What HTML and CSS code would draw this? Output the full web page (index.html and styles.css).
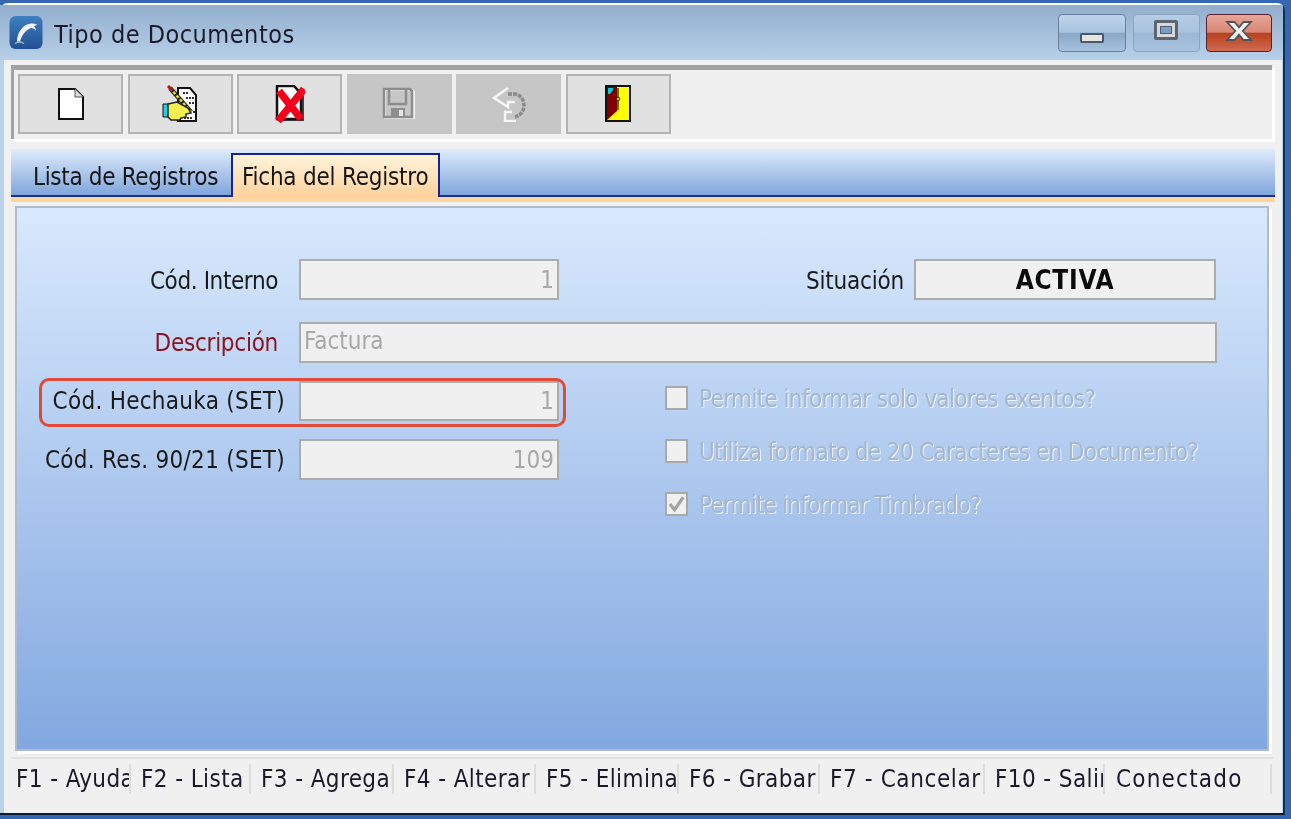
FILE: index.html
```html
<!DOCTYPE html>
<html lang="es">
<head>
<meta charset="utf-8">
<title>Tipo de Documentos</title>
<link rel="stylesheet" href="styles.css">
</head>
<body>
<div class="window">
  <header class="titlebar">
    <svg class="app-icon" viewBox="0 0 34 34" aria-hidden="true">
      <defs><linearGradient id="ai" x1="0" y1="0" x2="0" y2="1"><stop offset="0" stop-color="#3f7fc0"/><stop offset="1" stop-color="#234f92"/></linearGradient></defs>
      <rect x="0.5" y="0.5" width="33" height="33" rx="6" fill="url(#ai)"/>
      <path d="M8 26C8 18 13 9 22 8c2 0 5 0 6 1l-3 2c1 1 2 2 2 4-2-2-4-3-6-2-5 2-8 7-10 13z" fill="#eef2f8"/>
      <path d="M6 28c3-2 6-2 9 0" stroke="#9fbcdd" stroke-width="1.500" fill="none"/>
    </svg>
    <span class="title-text">Tipo de Documentos</span>
    <div class="caption-buttons">
      <div class="cap cap-min"><span class="glyph-min"></span></div>
      <div class="cap cap-max"><span class="glyph-max"></span></div>
      <div class="cap cap-close">
        <svg class="glyph-x" viewBox="0 0 24 16" aria-hidden="true"><path d="M4 2h5l3 3.500L15 2h5l-5.500 6L20 14h-5l-3-3.500L9 14H4l5.500-6z" fill="#f2f2f2" stroke="#555" stroke-width="1.200"/></svg>
      </div>
    </div>
  </header>
  <div class="client">
    <div class="toolbar">
      <button class="tool">
        <svg class="ic" width="28" height="34" viewBox="0 0 28 34" aria-hidden="true"><path d="M2 2h16l8 8v22H2z" fill="#fff" stroke="#111" stroke-width="2"/><path d="M18 2v8h8" fill="#ddd" stroke="#555" stroke-width="1"/></svg>
      </button>
      <button class="tool">
        <svg class="ic" width="36" height="38" viewBox="0 0 36 38" aria-hidden="true">
          <path d="M16 3h12l6 7v26H16z" fill="#fff" stroke="#111" stroke-width="2"/>
          <path d="M21 8h6M24 13h8M27 18h5M27 27h2M31 27h2M22 33h9" stroke="#333" stroke-width="2" stroke-dasharray="2 1"/>
          <path d="M8 3l21 24" stroke="#222" stroke-width="4.500"/>
          <path d="M8 3l21 24" stroke="#e8e020" stroke-width="2.500" stroke-dasharray="3 2"/>
          <path d="M6 1l4 4" stroke="#b01818" stroke-width="3"/>
          <path d="M1 19h5v13H1z" fill="#20d0e0" stroke="#111"/>
          <path d="M6 19l9-2 11 6 3 5-5 1v3l-5 1-1 2H9l-3-3z" fill="#f5f050" stroke="#222" stroke-width="1.500"/>
        </svg>
      </button>
      <button class="tool">
        <svg class="ic" width="30" height="38" viewBox="0 0 30 38" aria-hidden="true">
          <path d="M3 3l2 33h24V11l-7-8z" fill="#444"/>
          <path d="M2 1h17l7 8v25H2z" fill="#fff" stroke="#111" stroke-width="2.500"/>
          <path d="M4 6l22 28M29 4L3 36" stroke="#f4001a" stroke-width="7.500"/>
        </svg>
      </button>
      <button class="tool tool-off">
        <svg class="ic" width="34" height="34" viewBox="0 0 34 34" aria-hidden="true">
          <path d="M3 3h27l2 2v26H3z" fill="none" stroke="#f3f3f3" stroke-width="2"/>
          <path d="M2 2h26l2 2v26H2z" fill="none" stroke="#8d8d8d" stroke-width="2.500"/>
          <path d="M7 3v14h17V3" fill="none" stroke="#8d8d8d" stroke-width="2.500"/>
          <path d="M9 29v-8h14v8" fill="#8d8d8d"/><path d="M17 23h4v6h-4z" fill="#e4e4e4"/>
        </svg>
      </button>
      <button class="tool tool-off">
        <svg class="ic" width="36" height="36" viewBox="0 0 36 36" aria-hidden="true">
          <path d="M17 2L3 12l14 9v-5h7" fill="none" stroke="#f6f6f6" stroke-width="2.500"/>
          <path d="M17 8h7c12 2 12 20 0 23" fill="none" stroke="#8c8c8c" stroke-width="3.500" stroke-dasharray="4 1"/>
          <path d="M21 26H14v9h11" fill="none" stroke="#f6f6f6" stroke-width="2.500"/>
        </svg>
      </button>
      <button class="tool">
        <svg class="ic" width="26" height="38" viewBox="0 0 26 38" aria-hidden="true">
          <rect x="1" y="1" width="24" height="35" fill="#ffff00" stroke="#111" stroke-width="2"/>
          <path d="M2 2h10v24L2 35z" fill="#800000"/>
          <path d="M13 3v22" stroke="#111" stroke-width="1.200"/>
          <path d="M3 3h5v2L5 9H3z" fill="#12c8e0"/>
          <circle cx="13" cy="14" r="1.800" fill="#d8c020" stroke="#111" stroke-width=".8"/>
        </svg>
      </button>
    </div>
    <nav class="tabstrip">
      <div class="tab tab-list">Lista de Registros</div>
      <div class="tab tab-active">Ficha del Registro</div>
    </nav>
    <div class="tab-rule"></div>
    <main class="panel">
      <div class="row row-first">
        <label class="lbl lbl-wide lbl-int">Cód. Interno</label>
        <div class="field field-short num">1</div>
        <label class="lbl-sit">Situación</label>
        <div class="field field-sit">ACTIVA</div>
      </div>
      <div class="row row-desc">
        <label class="lbl lbl-wide lbl-req">Descripción</label>
        <div class="field field-long">Factura</div>
      </div>
      <div class="lower">
        <div class="lower-left">
          <div class="row row-hech">
            <label class="lbl lbl-set">Cód. Hechauka (SET)</label>
            <div class="field field-short num">1</div>
            <div class="highlight"></div>
          </div>
          <div class="row row-res">
            <label class="lbl lbl-set">Cód. Res. 90/21 (SET)</label>
            <div class="field field-short num">109</div>
          </div>
        </div>
        <div class="checks">
          <div class="check"><span class="box"></span><span class="check-text">Permite informar solo valores exentos?</span></div>
          <div class="check"><span class="box"></span><span class="check-text">Utiliza formato de 20 Caracteres en Documento?</span></div>
          <div class="check"><span class="box"><svg class="tick" viewBox="0 0 20 20" aria-hidden="true"><path d="M3 10l5 6 9-13" fill="none" stroke="#a4a4a4" stroke-width="3.500"/></svg></span><span class="check-text check-text-tight">Permite informar Timbrado?</span></div>
        </div>
      </div>
    </main>
    <footer class="statusbar">
      <div class="cell c1">F1 - Ayuda</div>
      <div class="cell c2">F2 - Lista</div>
      <div class="cell c3">F3 - Agregar</div>
      <div class="cell c4">F4 - Alterar</div>
      <div class="cell c5">F5 - Eliminar</div>
      <div class="cell c6">F6 - Grabar</div>
      <div class="cell c7">F7 - Cancelar</div>
      <div class="cell c8">F10 - Salir</div>
      <div class="cell c9">Conectado</div>
    </footer>
  </div>
</div>
</body>
</html>
```

FILE: styles.css
```css
* { box-sizing: border-box; }
html, body { margin: 0; padding: 0; }
body {
  width: 1291px;
  height: 819px;
  overflow: hidden;
  background: #3567b5;
  font-family: "DejaVu Sans", "Noto Sans", sans-serif;
  font-stretch: condensed;
  color: #111;
}
.window {
  margin-top: 3px;
  width: 1285px;
  height: 812px;
  border-top: 2px solid #fff;
  border-right: 2px solid #10304f;
  border-bottom: 2px solid #0c1c30;
  border-radius: 8px 8px 0 0;
  background: #b9d2ea;
  display: flex;
  flex-direction: column;
  filter: blur(0.4px);
}
.titlebar {
  height: 55px;
  flex: none;
  display: flex;
  align-items: center;
  padding: 0 11px 0 9px;
  background: linear-gradient(#92aecd, #b7d0e9);
}
.app-icon { width: 34px; height: 35px; flex: none; }
.title-text { margin-left: 11px; padding-top: 4px; font-size: 25px; letter-spacing: 0.5px; color: #1a1a2a; }
.caption-buttons { margin-left: auto; align-self: flex-start; margin-top: 9px; display: flex; gap: 6.5px; }
.cap {
  width: 68px;
  height: 38px;
  border-radius: 4px;
  border: 1.5px solid #67809e;
  background: linear-gradient(#bcd3ea 0, #a9c4e0 48%, #88a8c8 50%, #a5c1dd 100%);
  display: flex;
  align-items: center;
  justify-content: center;
}
.cap-max { width: 67px; border-color: #8ba4c0; background: linear-gradient(#b4cce4 0, #a9c3de 48%, #9ab7d5 50%, #a9c3de 100%); }
.cap-close {
  width: 66px;
  border-color: #5a2030;
  background: linear-gradient(#e8a596 0, #d88878 48%, #b9401e 50%, #cf6a50 100%);
}
.glyph-min { width: 24px; height: 10px; margin-top: 9px; border: 2px solid #4c5866; border-radius: 2px; background: #e4e4e4; }
.glyph-max { width: 24px; height: 20px; margin-top: -6px; border: 3px solid #5d6670; border-radius: 2px; background: #d8d8d8; display: flex; align-items: center; justify-content: center; }
.glyph-max::after { content: ""; width: 10px; height: 6px; background: #7f9cc0; border: 1px solid #4a5f80; }
.glyph-x { width: 36px; height: 24px; margin-top: -4px; }
.client {
  flex: 1;
  min-height: 0;
  margin-left: 4px;
  margin-right: 1px;
  padding: 5px 7px 0;
  background: #f0f0f0;
  display: flex;
  flex-direction: column;
}
.toolbar {
  height: 74px;
  flex: none;
  margin-right: 3px;
  padding: 4px 0 0 4px;
  border-top: 5px solid #a3a3a3;
  border-left: 3px solid #a3a3a3;
  box-shadow: 3px 3px 0 #fff;
  display: flex;
  align-items: flex-start;
  gap: 4.600px;
  background: #f0f0f0;
}
.tool {
  width: 105px;
  height: 60px;
  padding: 0;
  border: 2px solid #b4b4b4;
  background: #e1e1e1;
  display: flex;
  align-items: center;
  justify-content: center;
}
.tool-off { border-color: #c6c6c6; background: #c6c6c6; }
.tabstrip {
  margin-top: 10px;
  height: 48px;
  flex: none;
  margin-right: 0;
  padding: 4px 0 0 11px;
  display: flex;
  align-items: stretch;
  background: linear-gradient(#dfebfc, #7fa6dc);
  border-bottom: 2px solid #1b2f8f;
}
.tab { width: 209px; padding: 10px 0 0 11px; font-size: 24px; line-height: 28px; color: #161616; white-space: nowrap; }
.tab-list { letter-spacing: -0.33px; }
.tab-active {
  position: relative;
  margin-bottom: -2px;
  border: 2px solid #1b2190;
  border-bottom: none;
  background: linear-gradient(#fff3da, #ffd19d);
  padding: 8px 0 0 9px;
  letter-spacing: -0.22px;
}
.tab-rule { height: 5px; flex: none; margin-right: 0; background: #fdd5a5; }
.panel {
  flex: none;
  height: 545px;
  margin: 4px 6px 0 4px;
  border: 2px solid #b3bcc6;
  background: linear-gradient(#d9e9fd, #82a8e0);
  box-shadow: 3px 3px 0 #fff;
  padding: 51px 0 0 0;
}
.row { display: flex; align-items: center; position: relative; }
.lbl { width: 268px; text-align: right; font-size: 24px; color: #1a1a1a; white-space: nowrap; flex: none; margin-right: 14px; }
.lbl-wide { width: 261px; margin-right: 21px; }
.lbl-int { letter-spacing: -0.4px; padding-top: 2px; }
.lbl-set { letter-spacing: 0.27px; }
.lbl-req { color: #8a1420; letter-spacing: -0.27px; }
.lbl-sit { width: 345px; padding-top: 2px; text-align: right; font-size: 24px; letter-spacing: -0.2px; color: #1a1a1a; margin-right: 10px; flex: none; }
.field {
  height: 41px;
  border: 2px solid #acacac;
  background: #f0f0f0;
  font-size: 24px;
  color: #a8a8a8;
  display: flex;
  align-items: center;
  padding: 0 3px;
  white-space: nowrap;
  flex: none;
}
.field-short { width: 260px; }
.num { justify-content: flex-end; }
.field-long { width: 918px; padding-bottom: 3px; }
.field-sit { width: 302px; justify-content: center; color: #0b0b0b; font-weight: 700; font-size: 26px; letter-spacing: 0.7px; }
.row-desc { margin-top: 22px; }
.lower { display: flex; margin-top: 18px; }
.lower-left { flex: none; width: 541px; }
.row-res { margin-top: 18px; }
.row-hech .field { height: 40px; }
.highlight {
  position: absolute;
  left: 22px;
  top: -3px;
  width: 527px;
  height: 49px;
  border: 3px solid #e04a36;
  border-radius: 10px;
  pointer-events: none;
}
.checks { margin-left: 107px; margin-top: 5px; display: flex; flex-direction: column; gap: 29px; }
.check { display: flex; align-items: center; gap: 11px; height: 24px; white-space: nowrap; }
.box { width: 23px; height: 24px; border: 2px solid #a9a9a9; background: #f0f0f0; flex: none; display: flex; }
.tick { width: 100%; height: 100%; }
.check-text { padding-top: 2px; font-size: 24px; letter-spacing: -0.63px; color: #a6b6cc; text-shadow: 1px 1px 0 #edf3fb; }
.check-text-tight { letter-spacing: -0.8px; }
.statusbar {
  flex: none;
  margin-top: 6px;
  height: 40px;
  border-top: 2px solid #e0e0e0;
  margin-right: 2px;
  padding: 5px 0 0 0;
  display: flex;
  align-items: flex-start;
  font-size: 24px;
  letter-spacing: 0.4px;
  color: #1a1a2a;
}
.cell { height: 30px; line-height: 30px; overflow: hidden; white-space: nowrap; border-right: 2px solid #dcdcdc; padding-left: 5px; flex: none; }
.c1 { width: 120px; }
.c2 { width: 120px; padding-left: 10px; }
.c3 { width: 143px; padding-left: 10px; }
.c4 { width: 142px; padding-left: 10px; }
.c5 { width: 143px; padding-left: 10px; }
.c6 { width: 141px; padding-left: 10px; }
.c7 { width: 165px; padding-left: 10px; letter-spacing: 0.6px; }
.c8 { width: 120px; padding-left: 10px; }
.c9 { width: 167px; padding-left: 11px; letter-spacing: 1.2px; }
```
